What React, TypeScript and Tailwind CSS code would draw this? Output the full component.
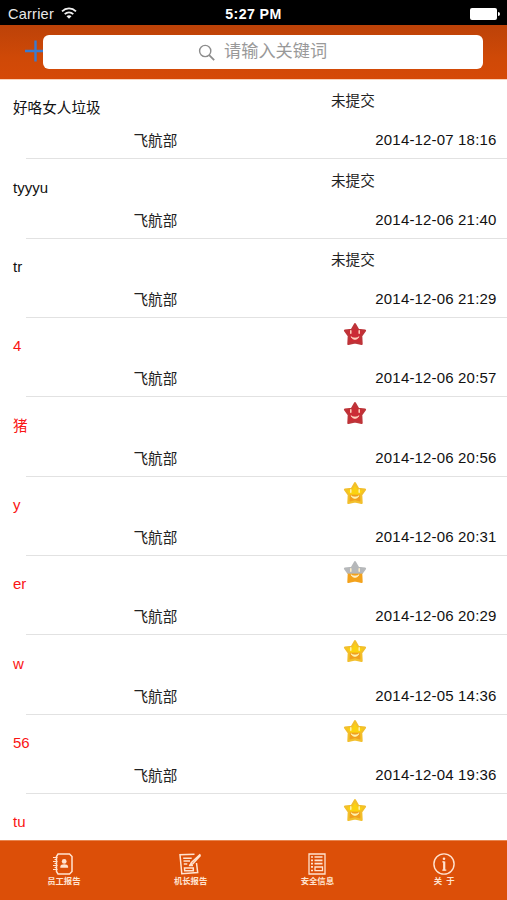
type Status = 'pending' | 'red' | 'yellow' | 'silver';

interface Report {
  title: string;
  status: Status;
  date?: string;
}

const DEPARTMENT = '飞航部';

const REPORTS: Report[] = [
  { title: '好咯女人垃圾', status: 'pending', date: '2014-12-07 18:16' },
  { title: 'tyyyu', status: 'pending', date: '2014-12-06 21:40' },
  { title: 'tr', status: 'pending', date: '2014-12-06 21:29' },
  { title: '4', status: 'red', date: '2014-12-06 20:57' },
  { title: '猪', status: 'red', date: '2014-12-06 20:56' },
  { title: 'y', status: 'yellow', date: '2014-12-06 20:31' },
  { title: 'er', status: 'silver', date: '2014-12-06 20:29' },
  { title: 'w', status: 'yellow', date: '2014-12-05 14:36' },
  { title: '56', status: 'yellow', date: '2014-12-04 19:36' },
  { title: 'tu', status: 'yellow' },
];

// upper / lower half colour of each star
const STAR_COLORS = {
  red: { top: '#cb2c35', bottom: '#cb2c35', edge: '#bd3439', face: '#ffd3bd' },
  yellow: { top: '#fbd20f', bottom: '#f0a01e', edge: '#f2bf2c', face: '#fff3b0' },
  silver: { top: '#b6b8ba', bottom: '#f3a21c', edge: '#b9b5aa', face: '#fff0c8' },
};

function Star({ kind }: { kind: 'red' | 'yellow' | 'silver' }) {
  const c = STAR_COLORS[kind];
  // the silver star has only its upper half outlined in grey
  const edge = kind === 'silver' ? 'url(#star-silver)' : c.edge;
  return (
    <svg viewBox="0 0 24 24" className="size-6">
      <defs>
        <linearGradient id={`star-${kind}`} x1="0" y1="0" x2="0" y2="1">
          <stop offset="0.54" stopColor={c.top} />
          <stop offset="0.62" stopColor={c.bottom} />
        </linearGradient>
      </defs>
      <path
        d="M12 2.2 15.2 7.8 22 8.7 18.2 13.8 18.6 22 12 20.4 5.4 22 5.8 13.8 2 8.7 8.8 7.8Z"
        fill={`url(#star-${kind})`}
        stroke={edge}
        strokeWidth="2.2"
        strokeLinejoin="round"
      />
      <path d="M7.8 8.8v2.4M16.2 8.8v2.4" stroke={c.face} strokeWidth="1.5" strokeLinecap="round" />
      <path d="M8 14.7c1.6 3.6 6.4 3.6 8 0-2 1.7-6 1.7-8 0Z" fill={c.face} stroke={c.face} strokeWidth="0.7" />
    </svg>
  );
}

function StatusBar() {
  return (
    <div className="grid h-[25px] shrink-0 grid-cols-3 items-center bg-black pt-[3px] leading-none text-white">
      <div className="flex items-center gap-[7px] pl-[8px]">
        <span className="text-[14.6px] tracking-[0.2px] text-[#e8e8e8]">Carrier</span>
        <svg viewBox="0 0 16 12" className="mb-[2px] h-[12px] w-[16px]" fill="none" stroke="#f0f0f0" strokeWidth="1.8">
          <path d="M1 4.3c4-3.9 10-3.9 14 0" />
          <path d="M3.7 7.2c2.5-2.3 6.1-2.3 8.6 0" />
          <path d="M8 11.8 5.5 9.2c1.4-1.3 3.6-1.3 5 0Z" fill="#f0f0f0" stroke="none" />
        </svg>
      </div>
      <span className="text-center text-[14.2px] font-bold tracking-[0.4px]">5:27 PM</span>
      <div className="flex items-center justify-end pr-[7px]">
        <div className="h-[12px] w-[27px] rounded-[2px] bg-white" />
        <div className="ml-px h-[4px] w-[2px] rounded-r-full bg-white" />
      </div>
    </div>
  );
}

function SearchHeader() {
  return (
    <header className="flex h-[55px] shrink-0 border-b border-[#f9d3bb] bg-linear-to-b from-[#bc4208] via-[#cf4907] via-60% to-[#d54a07] pt-[10px]">
      <svg viewBox="0 0 18 22" className="ml-[25px] mt-[5px] h-[22px] w-[18px]" fill="none" stroke="#3a7bd0" strokeWidth="2.4">
        <path d="M0 11h18M10.5 0.5v21" />
      </svg>
      <div className="flex h-[34px] w-[440px] items-center rounded-[6px] bg-white pl-[155px]">
        <svg viewBox="0 0 18 18" className="mt-px size-[18px]" fill="none" stroke="#8c8c8c" strokeWidth="1.4">
          <circle cx="7.2" cy="7" r="5.6" />
          <path d="m11.2 11.2 5 5" strokeWidth="1.8" />
        </svg>
        <span className="ml-[8px] text-[17.2px] leading-none text-[#999]">请输入关键词</span>
      </div>
    </header>
  );
}

// Latin titles are set slightly larger than Chinese ones
function Title({ value }: { value: string }) {
  const latin = /^[\x00-\x7f]+$/.test(value);
  return <span className={latin ? 'text-[15px]' : 'text-[14.6px]'}>{value}</span>;
}

function ReportRow({ report }: { report: Report }) {
  const pending = report.status === 'pending';
  return (
    <li className="flex h-[79.35px] shrink-0 flex-col">
      <div className="flex h-[43px] shrink-0">
        <div className={`w-[331px] shrink-0 pl-[13px] pt-[18.4px] leading-[20px] ${pending ? 'text-[#111]' : 'text-[#fa1414]'}`}>
          <Title value={report.title} />
        </div>
        {report.status === 'pending' ? (
          <span className="pt-[11.2px] text-[14.6px] leading-[20px] text-[#222]">未提交</span>
        ) : (
          <div className="pl-[12px] pt-[4px]">
            <Star kind={report.status} />
          </div>
        )}
      </div>
      {report.date && (
        <>
          <div className="flex flex-1 justify-between pl-[133.5px] pr-[10.5px] pt-[7.2px] leading-[20px] text-[#222]">
            <span className="pt-px text-[14.6px]">{DEPARTMENT}</span>
            <span className="text-[15px] tracking-[0.17px] text-[#111]">{report.date}</span>
          </div>
          <div className="ml-[26px] h-px shrink-0 bg-[#e2e2e2]" />
        </>
      )}
    </li>
  );
}

function StaffIcon() {
  return (
    <svg viewBox="0 0 22 22" className="size-[22px]" fill="none" stroke="#ffe3d0" strokeWidth="1.5">
      <path d="M6 1h11.5L20 3.5v15L17.5 21H6L4.5 18.5v-15Z" />
      <path d="M1 4.5h4.5M1 8.5h4.5M1 12.5h4.5M1 16.5h4.5M2.5 6.5h2M2.5 10.5h2M2.5 14.5h2" strokeWidth="1.2" />
      <circle cx="12.2" cy="8.4" r="2.4" fill="#ffe3d0" stroke="none" />
      <path d="M8.3 14.7v-1c0-3.2 7.8-3.2 7.8 0v1Z" fill="#ffe3d0" stroke="none" />
    </svg>
  );
}

function CaptainIcon() {
  return (
    <svg viewBox="0 0 22 22" className="size-[22px]" fill="none" stroke="#ffe3d0" strokeWidth="1.5">
      <path d="M15.5 1.2 1 1.8l1.8 19 15.9-1.2-1.2-9.6" />
      <path d="M4.2 5.2h8.5M4.5 8h6.5M4.8 11h3.5M10 12.5h4" />
      <path d="M5.5 15h8.8v2.8H5.7Z" />
      <path d="m21.3 1.2-8.8 8.3-1.3 2.3 2.5-.9 8-8.7" />
    </svg>
  );
}

function SafetyIcon() {
  return (
    <svg viewBox="0 0 22 22" className="size-[22px]" fill="none" stroke="#ffe3d0" strokeWidth="1.3">
      <path d="M3 1h16v20H3Z" />
      <path d="M5 4h2M8.5 4h8M5 7.3h2M8.5 7.3h8M5 10.6h2M8.5 10.6h8M5 13.9h2M5 17.5h2" strokeWidth="1.7" />
      <path d="M9 14h7.5v3.7H9Z" />
    </svg>
  );
}

function AboutIcon() {
  return (
    <svg viewBox="0 0 22 22" className="size-[22px]" fill="none" stroke="#ffe3d0">
      <circle cx="11" cy="11" r="10.1" strokeWidth="1.4" />
      <circle cx="11" cy="5.7" r="1.3" fill="#ffe3d0" stroke="none" />
      <path d="M9.3 8.9h2M9.3 17.2h4" strokeWidth="1.2" />
      <path d="M11.2 8.5v8.9" strokeWidth="2.2" />
    </svg>
  );
}

const TABS = [
  { label: '员工报告', Icon: StaffIcon },
  { label: '机长报告', Icon: CaptainIcon },
  { label: '安全信息', Icon: SafetyIcon },
  { label: '关\u2002于', Icon: AboutIcon },
];

function TabBar() {
  return (
    <nav className="grid h-[60px] shrink-0 grid-cols-4 border-t border-[#e8854f] bg-[#dc4f08]">
      {TABS.map(({ label, Icon }) => (
        <button key={label} className="flex flex-col items-center pt-[12px]">
          <Icon />
          <span className="whitespace-nowrap pl-px text-[8.4px] font-bold leading-[13px] text-[#ffe3d0]">{label}</span>
        </button>
      ))}
    </nav>
  );
}

export default function App() {
  return (
    <div className="flex h-[900px] w-[507px] flex-col overflow-hidden bg-white font-['Liberation_Sans','Noto_Sans_CJK_SC',sans-serif]">
      <StatusBar />
      <SearchHeader />
      <ul className="flex min-h-0 flex-1 flex-col overflow-hidden">
        {REPORTS.map(report => (
          <ReportRow key={report.title} report={report} />
        ))}
      </ul>
      <TabBar />
    </div>
  );
}
